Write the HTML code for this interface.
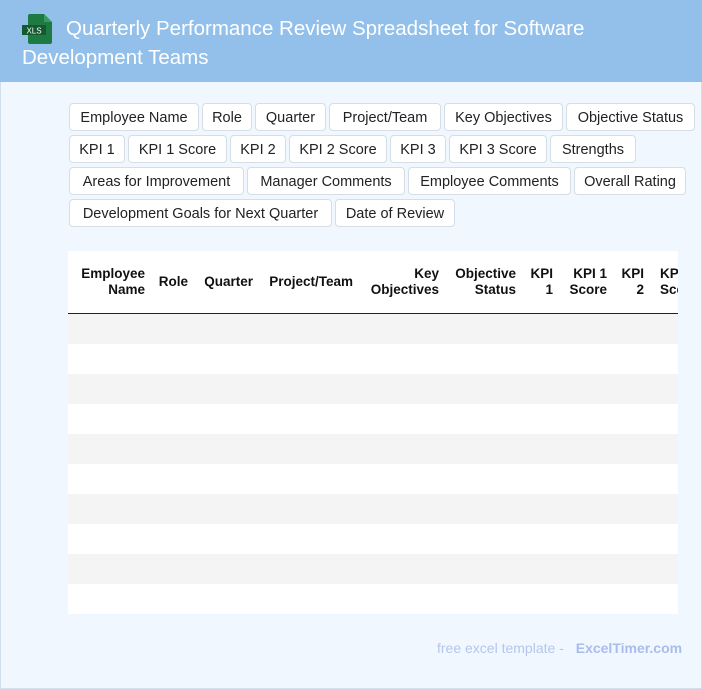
<!DOCTYPE html>
<html><head><meta charset="utf-8"><style>
*{margin:0;padding:0;box-sizing:border-box}
body{width:702px;height:689px;position:relative;overflow:hidden;background:#f0f7ff;font-family:"Liberation Sans",Arial,sans-serif}
.frame{position:absolute;left:0;top:0;width:702px;height:689px;border:1px solid #d2dfec;border-top:none}
.hdr{position:absolute;left:0;top:0;width:702px;height:82px;background:#92c0ea}
.title{position:absolute;left:22px;top:14px;width:640px;color:#fff;font-size:20.5px;line-height:29px;text-indent:44px}
.icon{position:absolute;left:22px;top:14px}
.tag{position:absolute;height:28px;background:#fff;border:1px solid #d6dde5;border-radius:4px;font-size:14.5px;color:#222;line-height:29px;text-align:center;white-space:nowrap}
.tbl{position:absolute;left:68px;top:251px;width:610px;height:363px;background:#fff;overflow:hidden}
.th{position:absolute;font-weight:bold;font-size:13.5px;line-height:16px;color:#111;text-align:right;white-space:nowrap}
.line{position:absolute;left:0;top:62px;width:610px;height:2px;background:#222}
.row{position:absolute;left:0;width:610px;height:30px;background:#f4f4f4}
.foot{position:absolute;left:437px;top:640px;font-size:14px;color:#b5c6ec}
.foot b{color:#a9bdec;margin-left:8px}
</style></head><body>
<div class="frame"></div>
<div class="hdr">
<svg class="icon" width="30" height="30" viewBox="0 0 30 30"><path d="M8 0h14l8 8v20a2 2 0 0 1-2 2H8a2 2 0 0 1-2-2V2a2 2 0 0 1 2-2z" fill="#1d7a43"/><path d="M22 0v8h8z" fill="#3a9a60"/><rect x="0" y="11" width="24" height="10" fill="#135a30"/><text x="12" y="19.5" font-size="8" fill="#fff" text-anchor="middle" font-family="Liberation Sans">XLS</text></svg>
<div class="title">Quarterly Performance Review Spreadsheet for Software Development Teams</div>
</div>
<div class="tag" style="left:69px;top:103px;width:130px">Employee Name</div>
<div class="tag" style="left:202px;top:103px;width:50px">Role</div>
<div class="tag" style="left:255px;top:103px;width:71px">Quarter</div>
<div class="tag" style="left:329px;top:103px;width:112px">Project/Team</div>
<div class="tag" style="left:444px;top:103px;width:119px">Key Objectives</div>
<div class="tag" style="left:566px;top:103px;width:129px">Objective Status</div>
<div class="tag" style="left:69px;top:135px;width:56px">KPI 1</div>
<div class="tag" style="left:128px;top:135px;width:99px">KPI 1 Score</div>
<div class="tag" style="left:230px;top:135px;width:56px">KPI 2</div>
<div class="tag" style="left:289px;top:135px;width:98px">KPI 2 Score</div>
<div class="tag" style="left:390px;top:135px;width:56px">KPI 3</div>
<div class="tag" style="left:449px;top:135px;width:98px">KPI 3 Score</div>
<div class="tag" style="left:550px;top:135px;width:86px">Strengths</div>
<div class="tag" style="left:69px;top:167px;width:175px">Areas for Improvement</div>
<div class="tag" style="left:247px;top:167px;width:158px">Manager Comments</div>
<div class="tag" style="left:408px;top:167px;width:163px">Employee Comments</div>
<div class="tag" style="left:574px;top:167px;width:112px">Overall Rating</div>
<div class="tag" style="left:69px;top:199px;width:263px">Development Goals for Next Quarter</div>
<div class="tag" style="left:335px;top:199px;width:120px">Date of Review</div>
<div class="tbl">
<div class="th" style="right:533px;top:15px">Employee<br>Name</div>
<div class="th" style="right:490px;top:23px">Role</div>
<div class="th" style="right:425px;top:23px">Quarter</div>
<div class="th" style="right:325px;top:23px">Project/Team</div>
<div class="th" style="right:239px;top:15px">Key<br>Objectives</div>
<div class="th" style="right:162px;top:15px">Objective<br>Status</div>
<div class="th" style="right:125px;top:15px">KPI<br>1</div>
<div class="th" style="right:71px;top:15px">KPI 1<br>Score</div>
<div class="th" style="right:34px;top:15px">KPI<br>2</div>
<div class="th" style="left:592px;top:15px;text-align:left">KPI 2<br>Score</div>
<div class="line"></div>
<div class="row" style="top:63px"></div>
<div class="row" style="top:123px"></div>
<div class="row" style="top:183px"></div>
<div class="row" style="top:243px"></div>
<div class="row" style="top:303px"></div>
</div>
<div class="foot">free excel template - <b>ExcelTimer.com</b></div>
</body></html>
